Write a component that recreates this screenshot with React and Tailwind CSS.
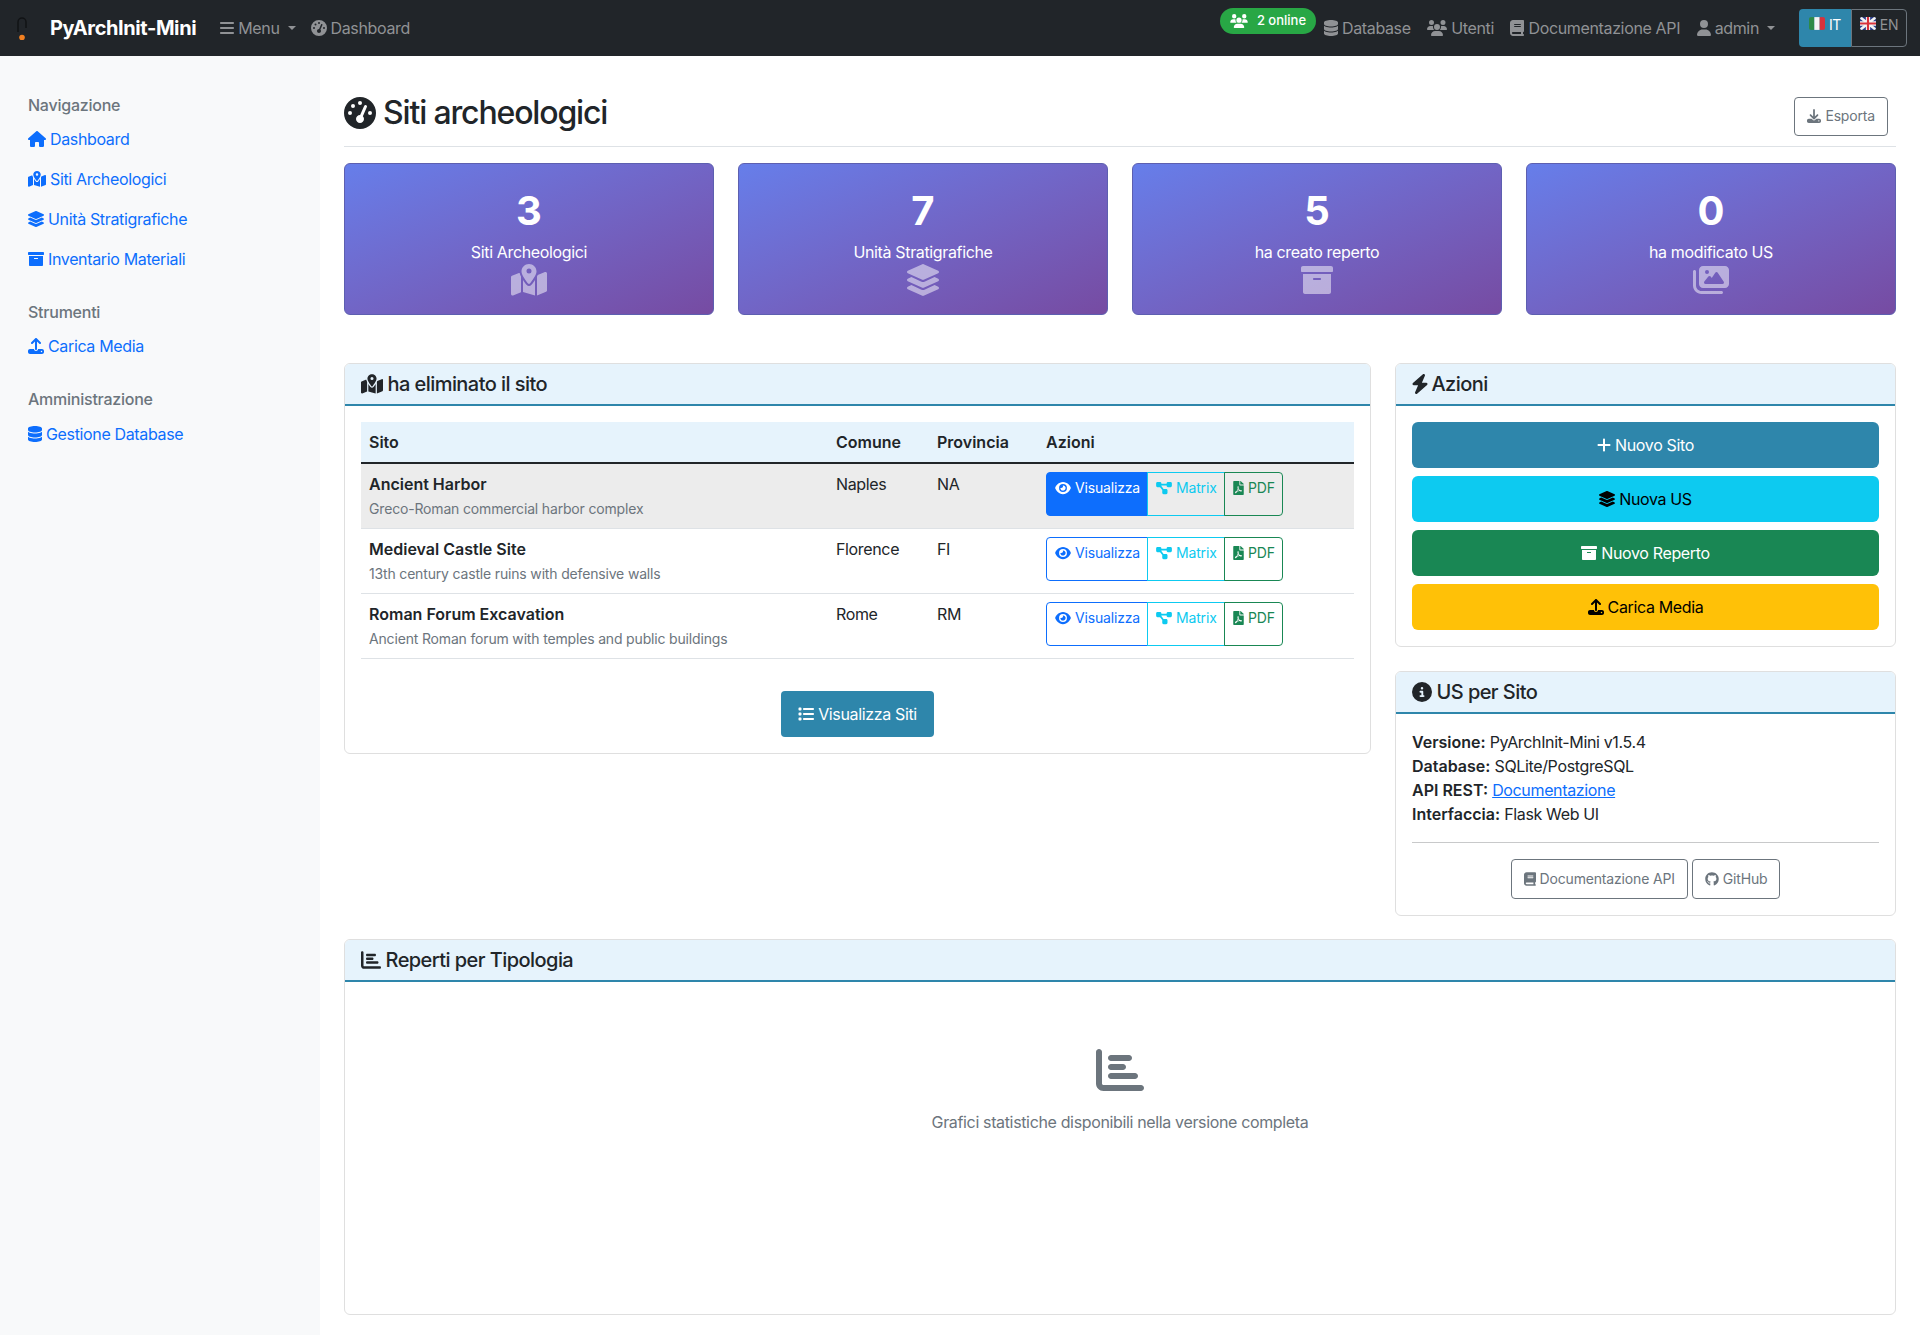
import { FaArchive, FaFilePdf, FaLayerGroup } from 'react-icons/fa';
import {
  FaBars, FaBolt, FaBook, FaChartBar, FaCircleInfo, FaDatabase, FaDiagramProject, FaDownload, FaEye, FaGaugeHigh,
  FaGithub, FaHouse, FaImages, FaList, FaMapLocationDot, FaPlus, FaUpload, FaUser, FaUsers,
} from 'react-icons/fa6';

const stats = [
  { value: '3', label: 'Siti Archeologici', Icon: FaMapLocationDot, iconClass: 'w-[36px]' },
  { value: '7', label: 'Unità Stratigrafiche', Icon: FaLayerGroup, iconClass: 'w-[32px]' },
  { value: '5', label: 'ha creato reperto', Icon: FaArchive, iconClass: 'w-[32px]' },
  { value: '0', label: 'ha modificato US', Icon: FaImages, iconClass: 'w-[36px]' },
];

const sites = [
  { name: 'Ancient Harbor', desc: 'Greco-Roman commercial harbor complex', city: 'Naples', prov: 'NA', active: true },
  { name: 'Medieval Castle Site', desc: '13th century castle ruins with defensive walls', city: 'Florence', prov: 'FI' },
  { name: 'Roman Forum Excavation', desc: 'Ancient Roman forum with temples and public buildings', city: 'Rome', prov: 'RM' },
];

const SideGroup = ({ title, links, className, linksClass }) => (
  <div className={className}>
    <div className="h-6 font-medium leading-6 tracking-[-0.015em] text-[#6c757d]">{title}</div>
    <div className={`flex flex-col gap-4 ${linksClass || 'mt-[10px]'}`}>
      {links.map(({ label, Icon, iconClass }) => (
        <a key={label} className="flex h-6 items-center gap-1 leading-6 text-[#0d6efd]">
          <Icon className={`shrink-0 ${iconClass}`} />
          {label}
        </a>
      ))}
    </div>
  </div>
);

const NavLink = ({ Icon, iconClass, children, caret }) => (
  <a className="flex items-center gap-1 text-[#909295]">
    <Icon className={`shrink-0 ${iconClass}`} />
    {children}
    {caret && <span className="ml-1 h-0 w-0 border-x-[4.8px] border-t-[4.8px] border-x-transparent border-t-[#909295]" />}
  </a>
);

const Card = ({ Icon, iconClass, title, className, children }) => (
  <div className={`overflow-hidden rounded-[6px] border border-[#dfdfdf] bg-white ${className || ''}`}>
    <div className="flex h-[42px] items-center gap-[4.5px] border-b-2 border-[#2e86ab] bg-[#e6f3fc] px-4 text-[20px] font-medium tracking-[-0.028em] text-[#212529]">
      <Icon className={`shrink-0 ${iconClass}`} />
      {title}
    </div>
    {children}
  </div>
);

const RowActions = ({ active }) => (
  <div className="flex h-[44px] w-max text-sm tracking-[-0.012em]">
    <a className={`flex w-[102px] items-start gap-1 rounded-l-[4px] border border-[#0d6efd] px-2 pt-[5px] ${active ? 'bg-[#0d6efd] text-white' : 'text-[#0d6efd]'}`}>
      <FaEye className="mt-[3px] w-[16px] shrink-0" /> Visualizza
    </a>
    <a className="-ml-px flex w-[78px] items-start gap-1 border border-[#0dcaf0] px-2 pt-[5px] text-[#0dcaf0]">
      <FaDiagramProject className="mt-[3px] w-[16px] shrink-0" /> Matrix
    </a>
    <a className="-ml-px flex w-[59px] items-start gap-1 rounded-r-[4px] border border-[#198754] px-2 pt-[5px] text-[#198754]">
      <FaFilePdf className="mt-[3px] w-[11px] shrink-0" /> PDF
    </a>
  </div>
);

const BlockButton = ({ Icon, iconClass, label, className }) => (
  <a className={`flex h-[46px] items-center justify-center gap-1 rounded-[6px] ${className}`}>
    <Icon className={`shrink-0 ${iconClass}`} />
    {label}
  </a>
);

const OutlineButton = ({ Icon, iconClass, label }) => (
  <a className="flex h-[40px] items-center gap-1 rounded-[4px] border border-[#6c757d] px-3 text-sm tracking-[-0.012em] text-[#6c757d]">
    <Icon className={`shrink-0 ${iconClass}`} />
    {label}
  </a>
);

const FlagIt = () => (
  <svg width="16" height="13" viewBox="0 0 15 12" className="mt-[2px] shrink-0 rounded-[2px]">
    <rect width="5" height="12" fill="#2d8a47" />
    <rect x="5" width="5" height="12" fill="#f4f4f4" />
    <rect x="10" width="5" height="12" fill="#d8323c" />
  </svg>
);

const FlagEn = () => (
  <svg width="16" height="13" viewBox="0 0 15 12" className="mt-[2px] shrink-0 rounded-[2px]">
    <rect width="15" height="12" fill="#2b3f8c" />
    <path d="M0 0L15 12M15 0L0 12" stroke="#f4f4f4" strokeWidth="2.4" />
    <path d="M7.5 0V12M0 6H15" stroke="#f4f4f4" strokeWidth="4" />
    <path d="M7.5 0V12M0 6H15" stroke="#d8323c" strokeWidth="2" />
  </svg>
);

export default function App() {
  return (
    <div className="flex min-h-[1335px] flex-col bg-white font-['Inter',sans-serif] text-base tracking-[-0.022em] text-[#212529]">
      <nav className="flex h-14 items-center bg-[#212529] pl-[17px] pr-[13px]">
        <svg width="11" height="24" viewBox="0 0 11 24" className="shrink-0">
          <path d="M1 16V6a4 4 0 0 1 8 0V12" fill="none" stroke="#111315" strokeWidth="1.5" />
          <circle cx="5" cy="21.5" r="2.8" fill="#f28021" />
        </svg>
        <span className="ml-[22px] text-[20px] font-bold tracking-[-0.02em] text-white">PyArchInit-Mini</span>
        <div className="ml-6 flex items-center gap-[15px]">
          <NavLink Icon={FaBars} iconClass="w-[14px]" caret>Menu</NavLink>
          <NavLink Icon={FaGaugeHigh} iconClass="w-[16px]">Dashboard</NavLink>
        </div>
        <div className="ml-auto flex items-center">
          <span className="mb-[14px] flex h-[26px] w-[96px] items-center justify-center gap-[9px] rounded-full bg-[#28a745] text-[13px] font-medium tracking-normal text-white">
            <FaUsers className="w-[18px] text-[14px]" /> 2 online
          </span>
          <div className="ml-2 flex items-center gap-[16.5px]">
            <NavLink Icon={FaDatabase} iconClass="w-[14px]">Database</NavLink>
            <NavLink Icon={FaUsers} iconClass="w-[20px]">Utenti</NavLink>
            <NavLink Icon={FaBook} iconClass="w-[14px]">Documentazione API</NavLink>
            <NavLink Icon={FaUser} iconClass="w-[14px]" caret>admin</NavLink>
          </div>
          <div className="ml-6 flex h-[38px] text-sm">
            <a className="flex w-[52px] items-start justify-center gap-1 rounded-l-[4px] bg-[#2e86ab] pt-[6px] text-white">
              <FlagIt /> IT
            </a>
            <a className="flex w-[56px] items-start justify-center gap-1 rounded-r-[4px] border border-[#6c757d] pt-[5px] text-[#909295]">
              <FlagEn /> EN
            </a>
          </div>
        </div>
      </nav>

      <div className="flex flex-1">
        <aside className="w-[320px] shrink-0 bg-[#f8f9fa] pl-7 pt-[37px]">
          <SideGroup
            title="Navigazione"
            links={[
              { label: 'Dashboard', Icon: FaHouse, iconClass: 'w-[18px]' },
              { label: 'Siti Archeologici', Icon: FaMapLocationDot, iconClass: 'w-[18px]' },
              { label: 'Unità Stratigrafiche', Icon: FaLayerGroup, iconClass: 'w-[16px]' },
              { label: 'Inventario Materiali', Icon: FaArchive, iconClass: 'w-[16px]' },
            ]}
          />
          <SideGroup className="mt-[29px]" title="Strumenti" links={[{ label: 'Carica Media', Icon: FaUpload, iconClass: 'w-[16px]' }]} />
          <SideGroup className="mt-[29px]" linksClass="mt-[11px]" title="Amministrazione" links={[{ label: 'Gestione Database', Icon: FaDatabase, iconClass: 'w-[14px]' }]} />
        </aside>

        <main className="flex min-w-0 flex-1 flex-col px-6 pb-5">
          <div className="flex h-[91px] items-center justify-between border-b border-[#dee2e6] pt-6">
            <h1 className="flex items-center gap-[7px] text-[32px] font-medium tracking-[-0.036em]">
              <FaGaugeHigh className="w-[32px] shrink-0" /> Siti archeologici
            </h1>
            <a className="mr-2 mt-[6px] flex h-[39px] items-center gap-1 rounded-[4px] border border-[#6c757d] px-3 text-sm tracking-[-0.012em] text-[#6c757d]">
              <FaDownload className="w-[14px]" /> Esporta
            </a>
          </div>

          <div className="mt-4 grid grid-cols-4 gap-6">
            {stats.map(({ value, label, Icon, iconClass }) => (
              <div
                key={label}
                className="flex h-[152px] flex-col items-center rounded-[6px] border border-[#5d5fb0] bg-linear-to-br from-[#667eea] to-[#764ba2] pt-[23px] text-white"
              >
                <div className="h-12 text-[40px] font-bold leading-12 tracking-normal">{value}</div>
                <div className="mt-[5px] h-6 leading-6">{label}</div>
                <Icon className={`text-[32px] opacity-50 ${iconClass}`} />
              </div>
            ))}
          </div>

          <div className="mt-12 flex gap-6">
            <Card Icon={FaMapLocationDot} iconClass="w-[22px]" title="ha eliminato il sito" className="h-[391px] w-[1027px] shrink-0">
              <div className="p-4">
                <table className="w-[993px] table-fixed border-collapse tracking-normal">
                  <colgroup>
                    <col className="w-[467px]" />
                    <col className="w-[101px]" />
                    <col className="w-[109px]" />
                    <col className="w-[316px]" />
                  </colgroup>
                  <thead>
                    <tr className="h-[41px] border-b-2 border-[#212529] bg-[#e6f3fc] text-left">
                      <th className="px-2 font-semibold">Sito</th>
                      <th className="px-2 font-semibold">Comune</th>
                      <th className="px-2 font-semibold">Provincia</th>
                      <th className="px-2 font-semibold">Azioni</th>
                    </tr>
                  </thead>
                  <tbody>
                    {sites.map((site) => (
                      <tr key={site.name} className={`h-[65px] border-b border-[#dee2e6] align-top ${site.active ? 'bg-[#ececec]' : ''}`}>
                        <td className="px-2 pb-[6px] pt-2">
                          <div className="font-semibold leading-6">{site.name}</div>
                          <div className="mt-px text-sm leading-6 tracking-[-0.012em] text-[#6c757d]">{site.desc}</div>
                        </td>
                        <td className="px-2 pb-[6px] pt-2 leading-6 tracking-[-0.022em]">{site.city}</td>
                        <td className="px-2 pb-[6px] pt-2 leading-6 tracking-[-0.022em]">{site.prov}</td>
                        <td className="px-2 pb-[6px] pt-2"><RowActions active={site.active} /></td>
                      </tr>
                    ))}
                  </tbody>
                </table>
                <div className="mt-8 flex justify-center">
                  <a className="flex h-[46px] w-[153px] items-center justify-center gap-1 rounded-[4px] bg-[#2e86ab] text-white">
                    <FaList className="w-[16px]" /> Visualizza Siti
                  </a>
                </div>
              </div>
            </Card>

            <div className="flex min-w-0 flex-1 flex-col gap-6">
              <Card Icon={FaBolt} iconClass="-ml-px -mr-[2px] w-[18px]" title="Azioni">
                <div className="flex flex-col gap-2 p-4">
                  <BlockButton Icon={FaPlus} iconClass="w-[14px]" label="Nuovo Sito" className="bg-[#2e86ab] text-white" />
                  <BlockButton Icon={FaLayerGroup} iconClass="w-[16px]" label="Nuova US" className="bg-[#0dcaf0] text-black" />
                  <BlockButton Icon={FaArchive} iconClass="w-[16px]" label="Nuovo Reperto" className="bg-[#198754] text-white" />
                  <BlockButton Icon={FaUpload} iconClass="w-[16px]" label="Carica Media" className="bg-[#ffc107] text-black" />
                </div>
              </Card>
              <Card Icon={FaCircleInfo} iconClass="w-[20px]" title="US per Sito">
                <div className="p-4 leading-6">
                  <div><b className="font-semibold tracking-normal">Versione:</b> PyArchInit-Mini v1.5.4</div>
                  <div><b className="font-semibold tracking-normal">Database:</b> SQLite/PostgreSQL</div>
                  <div><b className="font-semibold tracking-normal">API REST:</b> <a className="text-[#0d6efd] underline">Documentazione</a></div>
                  <div><b className="font-semibold tracking-normal">Interfaccia:</b> Flask Web UI</div>
                  <hr className="my-4 border-[#c8c9ca]" />
                  <div className="flex justify-center gap-1">
                    <OutlineButton Icon={FaBook} iconClass="w-[12px]" label="Documentazione API" />
                    <OutlineButton Icon={FaGithub} iconClass="w-[14px]" label="GitHub" />
                  </div>
                </div>
              </Card>
            </div>
          </div>

          <Card Icon={FaChartBar} iconClass="w-[20px]" title="Reperti per Tipologia" className="mt-[23px] h-[376px]">
            <div className="flex flex-col items-center pt-16 text-[#6c757d]">
              <FaChartBar className="text-[48px]" />
              <p className="mt-4 leading-6">Grafici statistiche disponibili nella versione completa</p>
            </div>
          </Card>
        </main>
      </div>
    </div>
  );
}
